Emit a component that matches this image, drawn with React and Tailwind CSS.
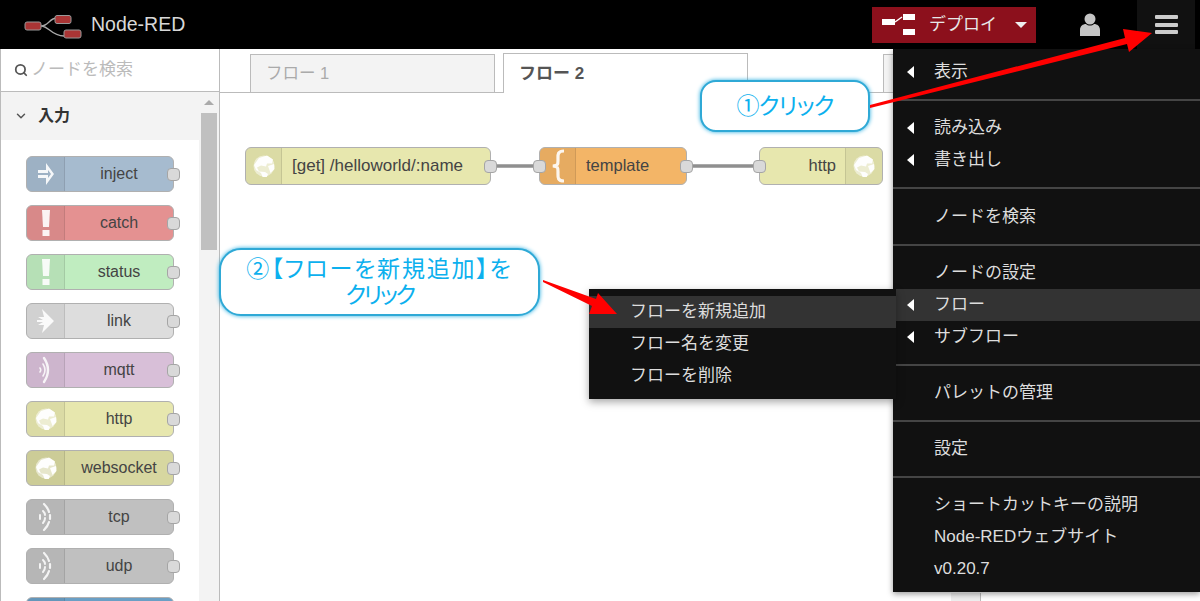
import { Search, ChevronDown } from "lucide-react";

const FONT = "[font-family:'Liberation_Sans','Noto_Sans_CJK_JP',sans-serif]";

const paletteNodes = [
  { label: "inject", color: "bg-[#a6bbcf]", icon: "inject" },
  { label: "catch", color: "bg-[#e49191]", icon: "alert" },
  { label: "status", color: "bg-[#c0edc0]", icon: "alert" },
  { label: "link", color: "bg-[#dddddd]", icon: "link" },
  { label: "mqtt", color: "bg-[#d8bfd8]", icon: "bridge" },
  { label: "http", color: "bg-[#e7e7ae]", icon: "globe" },
  { label: "websocket", color: "bg-[#d7d7a0]", icon: "globe" },
  { label: "tcp", color: "bg-[#c0c0c0]", icon: "dashes" },
  { label: "udp", color: "bg-[#c0c0c0]", icon: "dashes" },
  { label: "", color: "bg-[#6a9fc5]", icon: "" },
];

function NodeIcon({ type }) {
  if (type === "inject") {
    return (
      <svg width="18" height="24" viewBox="0 0 18 24" fill="white" opacity="0.9">
        <path d="M1 8h8V1l8 11-8 11v-7H1v-3h10v3l3-4-3-4v3H1z" />
      </svg>
    );
  }
  if (type === "alert") {
    return (
      <svg width="10" height="26" viewBox="0 0 10 26" fill="white" opacity="0.9">
        <path d="M1 0h8L8 17H2z" />
        <rect x="1.500" y="20" width="7" height="6" />
      </svg>
    );
  }
  if (type === "link") {
    return (
      <svg width="18" height="24" viewBox="0 0 18 24" fill="white" opacity="0.9">
        <path d="M5 0l12 12L5 24l2-8H1l5-3H0v-2h6L1 8h6z" />
      </svg>
    );
  }
  if (type === "bridge") {
    return (
      <svg width="14" height="30" viewBox="0 0 14 30" fill="none" stroke="white" strokeWidth="1.600" strokeLinecap="round" opacity="0.85">
        <path d="M5 3q8 12 0 24" strokeWidth="2.400" />
        <path d="M4 9q4 6 0 12" />
        <path d="M1 13q1.500 2 0 4" />
      </svg>
    );
  }
  if (type === "dashes") {
    return (
      <svg width="14" height="30" viewBox="0 0 14 30" fill="none" stroke="white" strokeWidth="2" strokeLinecap="round" opacity="0.85">
        <path d="M5 2q4 4 5 8M11 13v4M10 20q-1 4-5 8" strokeWidth="2.200" />
        <path d="M4 9q2 2 2 4M6 16q0 3-2 5" />
        <path d="M1 13v4" />
      </svg>
    );
  }
  if (type === "globe") {
    return (
      <svg width="22" height="22" viewBox="0 0 22 22" fill="white">
        <circle cx="11" cy="11" r="10.500" opacity="0.5" />
        <path d="M6 3l8-2.500 6 4-1 4-5 0-1 3-5-1-4 2 2 4 6 .5 3 2-2 5-3-1-2-5-5-3-2-5z" opacity="0.95" />
        <path d="M15 11l6-2 .5 5-4 4z" opacity="0.95" />
      </svg>
    );
  }
  if (type === "brace") {
    return (
      <svg width="14" height="34" viewBox="0 0 14 34" fill="none" stroke="white" strokeWidth="3.200" opacity="0.9">
        <path d="M13 2C6 2 7 6 7 11s0 5-5 6c5 1 5 1 5 6s-1 9 6 9" />
      </svg>
    );
  }
  return null;
}

function Port({ className }) {
  return <div className={`absolute h-[13px] w-[13px] rounded-[4px] border border-[#a5a5a5] bg-[#d9d9d9] ${className}`} />;
}

function PaletteNode({ node }) {
  return (
    <div className={`relative flex h-[36px] w-[148px] shrink-0 rounded-[6px] border border-[#b0b0b0] ${node.color}`}>
      <div className="flex w-[38px] items-center justify-center rounded-l-[5px] border-r border-black/10 bg-black/5">
        <NodeIcon type={node.icon} />
      </div>
      <div className="flex flex-1 items-center justify-center text-[16px] text-[#444]">{node.label}</div>
      {node.label && <Port className="right-[-7px] top-[11px]" />}
    </div>
  );
}

function MenuRow({ label, caret, active }) {
  return (
    <div className={`relative flex h-[32px] items-center pl-[41px] text-[17px] text-[#dddddd] ${active ? "bg-[#333333]" : ""}`}>
      {caret && <div className="absolute left-[14px] h-0 w-0 border-y-[6px] border-r-[7px] border-y-transparent border-r-white" />}
      {label}
    </div>
  );
}

function MenuDivider({ className = "my-[11px]" }) {
  return <div className={`h-[2px] bg-[#454545] ${className}`} />;
}

function Callout({ className, children }) {
  return (
    <div className={`absolute flex flex-col items-center justify-center border-2 border-[#2fa9d6] bg-white text-center text-[#0cb0ee] shadow-[0_0_4px_#25ade0] [font-feature-settings:'palt'] ${className}`}>
      {children}
    </div>
  );
}

export default function App() {
  return (
    <div className={`relative h-[601px] w-[1200px] overflow-hidden bg-white ${FONT}`}>
      <header className="flex h-[49px] items-center bg-black">
        <svg className="ml-[24px] mt-[5px]" width="58" height="26" viewBox="0 0 58 26">
          <path d="M17 12c8 0 8-8 16-8M17 12c8 0 10 10 23 10" fill="none" stroke="#aaa" strokeWidth="1.300" />
          <rect x="1" y="8" width="16" height="8" rx="2" fill="#a93535" stroke="#999" />
          <rect x="31" y="1.500" width="16" height="8" rx="2" fill="#a93535" stroke="#999" />
          <rect x="40" y="16" width="17" height="8" rx="2" fill="#a93535" stroke="#999" />
        </svg>
        <span className="ml-[9px] text-[19.500px] text-[#d8d8d8]">Node-RED</span>
        <div className="ml-auto flex h-[36px] w-[164px] items-center bg-[#8c101c] pl-[10px]">
          <svg width="33" height="21" viewBox="0 0 33 21" fill="white">
            <rect x="0" y="5" width="13" height="6" />
            <rect x="21" y="0" width="12" height="6" />
            <rect x="21" y="15" width="12" height="6" />
            <path d="M13 8l7-5" stroke="white" strokeWidth="1.500" />
          </svg>
          <span className="ml-[14px] text-[17px] text-[#e8e8e8]">デプロイ</span>
          <div className="ml-[18px] h-0 w-0 border-x-[6px] border-t-[6px] border-x-transparent border-t-[#eeeeee]" />
        </div>
        <svg className="ml-[44px]" width="20" height="23" viewBox="0 0 20 23" fill="#c4c4c4">
          <circle cx="10" cy="6" r="5.500" />
          <path d="M0 23v-6c0-4 3-6 6-6 2 2 6 2 8 0 3 0 6 2 6 6v6z" />
        </svg>
        <div className="ml-[37px] mr-[5px] flex h-[49px] w-[58px] flex-col items-center justify-center gap-[3.500px] bg-[#111111]">
          <div className="h-[4px] w-[23px] rounded-[1px] bg-[#cccccc]" />
          <div className="h-[4px] w-[23px] rounded-[1px] bg-[#cccccc]" />
          <div className="h-[4px] w-[23px] rounded-[1px] bg-[#cccccc]" />
        </div>
      </header>

      <div className="flex h-[552px]">
        <aside className="flex w-[220px] shrink-0 flex-col border-x border-[#bbbbbb]">
          <div className="flex h-[43px] shrink-0 items-center border-b border-[#bbbbbb] pl-[13px]">
            <Search size={14} strokeWidth={3} className="text-[#555]" />
            <span className="ml-[3px] text-[17px] text-[#bbbbbb]">ノードを検索</span>
          </div>
          <div className="flex min-h-0 flex-1">
            <div className="w-[198px] shrink-0 overflow-hidden">
              <div className="flex h-[48px] items-center bg-[#f3f3f3] pl-[13px]">
                <ChevronDown size={14} strokeWidth={2.500} className="text-[#555]" />
                <span className="ml-[10px] text-[16px] font-bold text-[#333]">入力</span>
              </div>
              <div className="flex flex-col items-start gap-[13px] pl-[25px] pt-[16px]">
                {paletteNodes.map((node, i) => (
                  <PaletteNode key={i} node={node} />
                ))}
              </div>
            </div>
            <div className="flex flex-1 flex-col items-center bg-[#f3f3f3] pt-[8px]">
              <div className="h-0 w-0 border-x-[5px] border-b-[5px] border-x-transparent border-b-[#aaaaaa]" />
              <div className="ml-[-1px] mt-[8px] h-[137px] w-[16px] bg-[#c0c0c0]" />
            </div>
          </div>
        </aside>

        <main className="flex w-[731px] shrink-0 flex-col">
          <div className="flex h-[44px] shrink-0 items-end border-b border-[#bbbbbb] pl-[30px]">
            <div className="mb-[-1px] flex h-[39px] w-[245px] items-center border border-[#bbbbbb] bg-[#f3f3f3] pl-[15px] text-[16.500px] text-[#aaaaaa]">フロー 1</div>
            <div className="mb-[-1px] ml-[8px] flex h-[40px] w-[245px] items-center border border-b-0 border-[#bbbbbb] bg-white pl-[15px] text-[17px] font-bold text-[#555]">フロー 2</div>
            <div className="mb-[-1px] ml-[135px] h-[39px] flex-1 border border-[#bbbbbb] bg-[#f3f3f3]" />
          </div>
          <div className="relative flex-1">
            <svg className="absolute left-0 top-0" width="731" height="120">
              <path d="M271 73h48M467 73h73" stroke="#8f8f8f" strokeWidth="3.500" fill="none" />
            </svg>

            <div className="absolute left-[25px] top-[54px] flex h-[38px] w-[246px] rounded-[6px] border border-[#b0b0b0] bg-[#e7e7ae]">
              <div className="flex w-[36px] items-center justify-center rounded-l-[5px] border-r border-black/10 bg-black/5">
                <NodeIcon type="globe" />
              </div>
              <div className="flex flex-1 items-center pb-[1px] pl-[10px] text-[17px] text-[#444]">[get] /helloworld/:name</div>
              <Port className="right-[-7px] top-[12px]" />
            </div>

            <div className="absolute left-[319px] top-[54px] flex h-[38px] w-[148px] rounded-[6px] border border-[#b0b0b0] bg-[#f3b567]">
              <div className="flex w-[36px] items-center justify-center rounded-l-[5px] border-r border-black/10 bg-black/5">
                <NodeIcon type="brace" />
              </div>
              <div className="flex flex-1 items-center pb-[1px] pl-[10px] text-[16.500px] text-[#444]">template</div>
              <Port className="left-[-7px] top-[12px]" />
              <Port className="right-[-7px] top-[12px]" />
            </div>

            <div className="absolute left-[539px] top-[54px] flex h-[38px] w-[124px] rounded-[6px] border border-[#b0b0b0] bg-[#e7e7ae]">
              <div className="flex flex-1 items-center justify-end pb-[1px] pr-[9px] text-[16.500px] text-[#444]">http</div>
              <div className="flex w-[37px] items-center justify-center rounded-r-[5px] border-l border-black/10 bg-black/5">
                <NodeIcon type="globe" />
              </div>
              <Port className="left-[-7px] top-[12px]" />
            </div>
          </div>
        </main>

        <div className="flex flex-1 items-end">
          <div className="h-[8px] w-[29px] bg-[#eeeeee]" />
          <div className="h-[8px] w-[200px] border-l border-[#bbbbbb] bg-white" />
        </div>
      </div>

      <nav className="absolute left-[893px] top-[49px] h-[543px] w-[307px] bg-[#111111] pt-[7px] shadow-[0_2px_6px_rgba(0,0,0,0.4)]">
        <MenuRow label="表示" caret />
        <MenuDivider />
        <MenuRow label="読み込み" caret />
        <MenuRow label="書き出し" caret />
        <MenuDivider className="mb-[12px] mt-[11px]" />
        <MenuRow label="ノードを検索" />
        <MenuDivider />
        <MenuRow label="ノードの設定" />
        <MenuRow label="フロー" caret active />
        <MenuRow label="サブフロー" caret />
        <MenuDivider />
        <MenuRow label="パレットの管理" />
        <MenuDivider />
        <MenuRow label="設定" />
        <MenuDivider />
        <MenuRow label="ショートカットキーの説明" />
        <MenuRow label="Node-REDウェブサイト" />
        <MenuRow label="v0.20.7" />
      </nav>

      <div className="absolute left-[589px] top-[289px] h-[110px] w-[307px] bg-[#111111] pt-[7px] text-[17px] text-[#dddddd] shadow-[0_3px_8px_rgba(0,0,0,0.35)]">
        <div className="flex h-[32px] items-center bg-[#333333] pl-[41px]">フローを新規追加</div>
        <div className="flex h-[32px] items-center pl-[41px]">フロー名を変更</div>
        <div className="flex h-[32px] items-center pl-[41px]">フローを削除</div>
      </div>

      <Callout className="left-[700px] top-[80px] h-[52px] w-[170px] rounded-[16px] text-[23px] leading-[28px] tracking-[-0.8px]">①クリック</Callout>
      <Callout className="left-[219px] top-[248px] h-[68px] w-[321px] rounded-[22px] text-[23px] leading-[26px]">
        <span className="tracking-[1.8px]">②【フローを新規追加】を</span>
        <span className="tracking-[-2.500px]">クリック</span>
      </Callout>

      <svg className="pointer-events-none absolute left-0 top-0" width="1200" height="601">
        <polygon points="870,105 1125,38 1123,29 1152,33 1129,52 1127,44 870,108" fill="#ff0000" />
        <polygon points="543,280 596,299 598,293 617,314 589,314 592,306 543,282" fill="#ff0000" />
      </svg>
    </div>
  );
}
